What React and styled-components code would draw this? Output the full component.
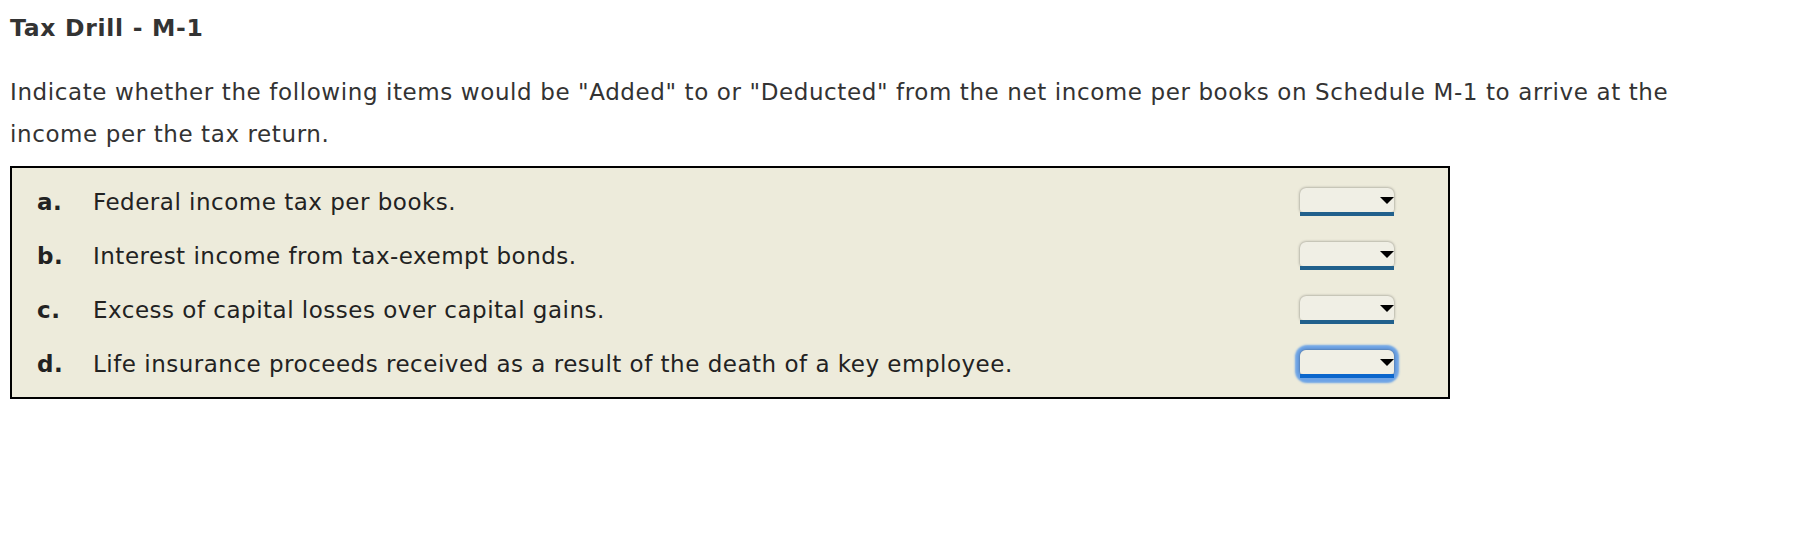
import React from "react";
import styled, { createGlobalStyle } from "styled-components";

const GlobalStyle = createGlobalStyle`
    html, body {
        margin: 0;
        padding: 0;
        background: #ffffff;
    }
    body {
        font-family: "DejaVu Sans", Verdana, sans-serif;
        color: #333333;
    }
`;

const Page = styled.div`
    padding: 14px 10px 0 10px;
`;

const Title = styled.h2`
    margin: 0;
    font-size: 23.5px;
    line-height: 28px;
    font-weight: bold;
    letter-spacing: 0.7px;
    color: #333333;
`;

const Intro = styled.p`
    margin: 29px 0 0 0;
    max-width: 1700px;
    font-size: 23px;
    line-height: 42px;
    letter-spacing: 0.6px;
    color: #333333;
`;

const Panel = styled.div`
    width: 1436px;
    margin-top: 11px;
    border: 2px solid #000000;
    background-color: #edebdb;
    padding: 7px 0 6px 0;
`;

const Row = styled.div`
    display: grid;
    grid-template-columns: 56px 1fr 94px;
    align-items: center;
    height: 54px;
    padding: 0 54px 0 25px;
    font-size: 23px;
    letter-spacing: 0.5px;
    color: #222222;
`;

const Letter = styled.span`
    font-weight: bold;
`;

const Item = styled.span``;

const SelectWrap = styled.div`
    position: relative;
    display: flex;
    flex-direction: column;
    width: 94px;
    border-radius: 6px 6px 0 0;
    ${({ focused }) =>
        focused &&
        `box-shadow: 0 0 2px 5px rgba(86, 150, 232, 0.85);
         border-radius: 7px;`}
`;

const SelectBox = styled.select`
    appearance: none;
    -webkit-appearance: none;
    width: 94px;
    height: 24px;
    margin: 0;
    padding: 0 18px 0 6px;
    border: none;
    border-radius: 6px 6px 3px 3px;
    background-color: #f0efe5;
    box-shadow: 0 0 3px rgba(0, 0, 0, 0.45);
    font-family: "DejaVu Sans", Verdana, sans-serif;
    font-size: 16px;
    outline: none;
`;

const Underline = styled.div`
    height: 4px;
    background-color: ${({ focused }) => (focused ? "#0a66cc" : "#21608c")};
`;

const Arrow = styled.svg`
    position: absolute;
    right: 0;
    top: 9px;
    width: 14px;
    height: 7px;
    pointer-events: none;
`;

const items = [
    { letter: "a.", text: "Federal income tax per books." },
    { letter: "b.", text: "Interest income from tax-exempt bonds." },
    { letter: "c.", text: "Excess of capital losses over capital gains." },
    { letter: "d.", text: "Life insurance proceeds received as a result of the death of a key employee.", focused: true },
];

function Dropdown({ focused }) {
    return (
        <SelectWrap focused={focused}>
            <SelectBox defaultValue="">
                <option value=""></option>
                <option value="added">Added</option>
                <option value="deducted">Deducted</option>
            </SelectBox>
            <Underline focused={focused} />
            <Arrow viewBox="0 0 14 7">
                <polygon points="0,0 14,0 7,7" fill="#000" />
            </Arrow>
        </SelectWrap>
    );
}

export default function App() {
    return (
        <>
            <GlobalStyle />
            <Page>
                <Title>Tax Drill - M-1</Title>
                <Intro>
                    Indicate whether the following items would be "Added" to or "Deducted" from the net income per
                    books on Schedule M-1 to arrive at the income per the tax return.
                </Intro>
                <Panel>
                    {items.map(item => (
                        <Row key={item.letter}>
                            <Letter>{item.letter}</Letter>
                            <Item>{item.text}</Item>
                            <Dropdown focused={item.focused} />
                        </Row>
                    ))}
                </Panel>
            </Page>
        </>
    );
}
